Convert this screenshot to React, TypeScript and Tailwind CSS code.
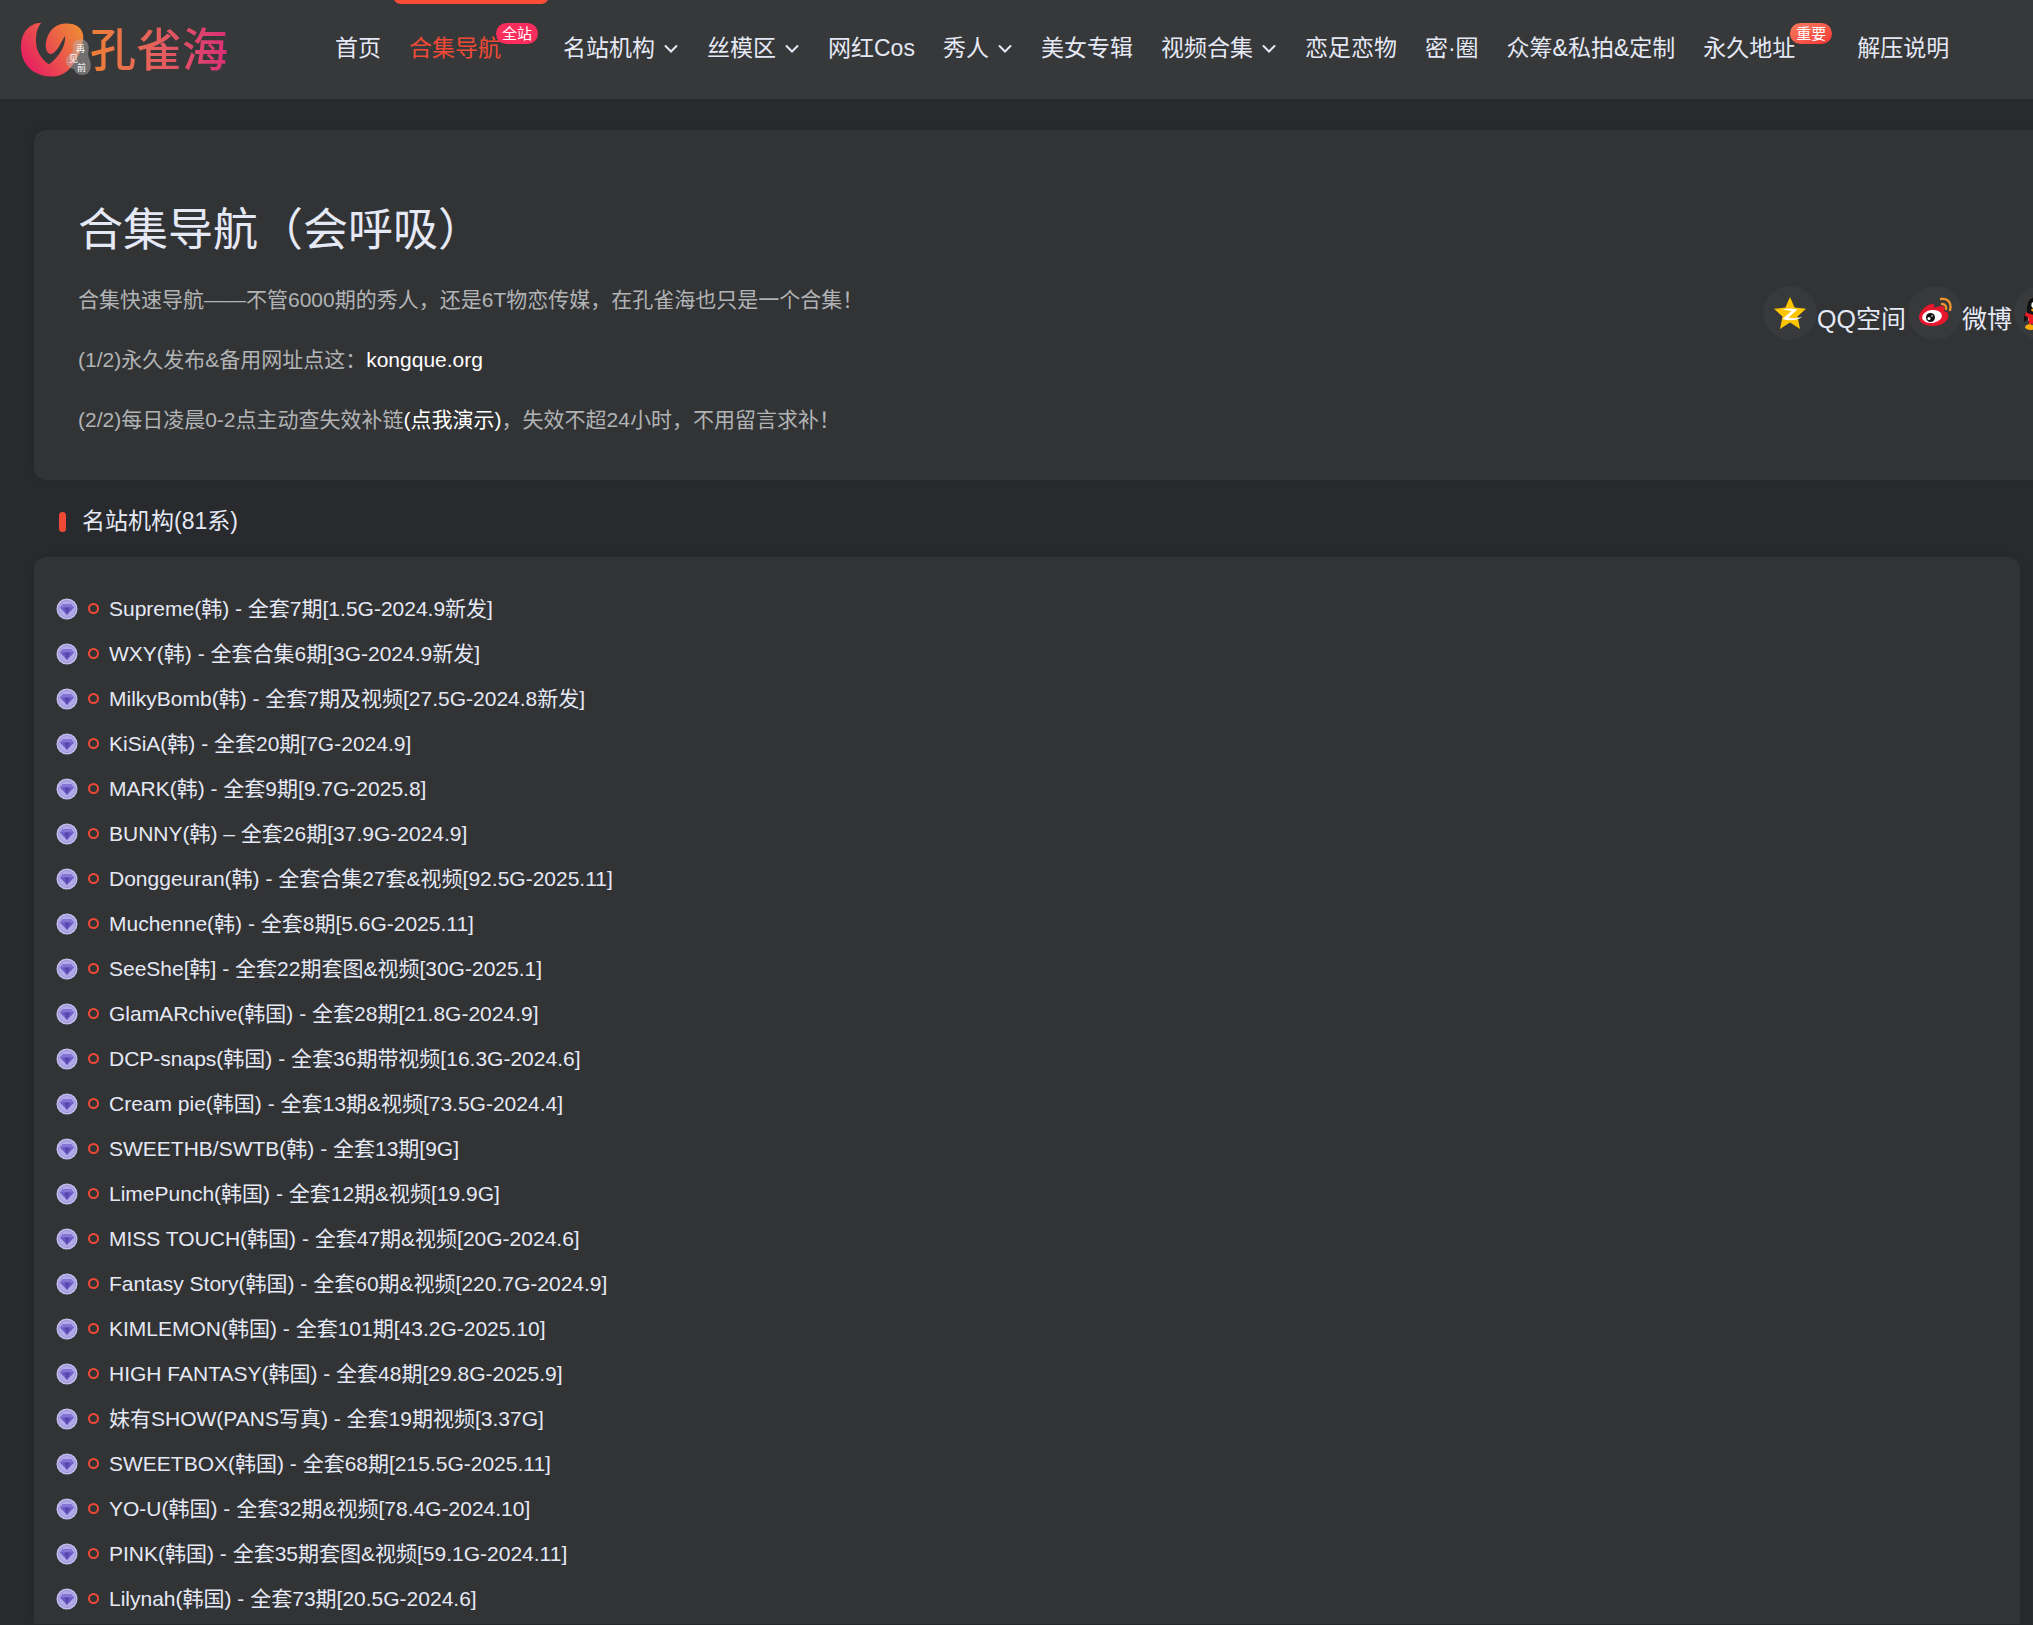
import { useId } from "react";

const FONT = 'font-["Liberation_Sans","Noto_Sans_CJK_SC",sans-serif]';

type NavItem = {
  label: string;
  active?: boolean;
  dropdown?: boolean;
  badge?: string;
  badgeClass?: string;
};

const NAV_ITEMS: NavItem[] = [
  { label: "首页" },
  { label: "合集导航", active: true, badge: "全站", badgeClass: "bg-[#fb2d5c]" },
  { label: "名站机构", dropdown: true },
  { label: "丝模区", dropdown: true },
  { label: "网红Cos" },
  { label: "秀人", dropdown: true },
  { label: "美女专辑" },
  { label: "视频合集", dropdown: true },
  { label: "恋足恋物" },
  { label: "密·圈" },
  { label: "众筹&私拍&定制" },
  {
    label: "永久地址",
    badge: "重要",
    badgeClass: "bg-linear-to-br from-[#f87b60] to-[#f62f35]",
  },
  { label: "解压说明" },
];

const COLLECTIONS = [
  "Supreme(韩) - 全套7期[1.5G-2024.9新发]",
  "WXY(韩) - 全套合集6期[3G-2024.9新发]",
  "MilkyBomb(韩) - 全套7期及视频[27.5G-2024.8新发]",
  "KiSiA(韩) - 全套20期[7G-2024.9]",
  "MARK(韩) - 全套9期[9.7G-2025.8]",
  "BUNNY(韩) – 全套26期[37.9G-2024.9]",
  "Donggeuran(韩) - 全套合集27套&视频[92.5G-2025.11]",
  "Muchenne(韩) - 全套8期[5.6G-2025.11]",
  "SeeShe[韩] - 全套22期套图&视频[30G-2025.1]",
  "GlamARchive(韩国) - 全套28期[21.8G-2024.9]",
  "DCP-snaps(韩国) - 全套36期带视频[16.3G-2024.6]",
  "Cream pie(韩国) - 全套13期&视频[73.5G-2024.4]",
  "SWEETHB/SWTB(韩) - 全套13期[9G]",
  "LimePunch(韩国) - 全套12期&视频[19.9G]",
  "MISS TOUCH(韩国) - 全套47期&视频[20G-2024.6]",
  "Fantasy Story(韩国) - 全套60期&视频[220.7G-2024.9]",
  "KIMLEMON(韩国) - 全套101期[43.2G-2025.10]",
  "HIGH FANTASY(韩国) - 全套48期[29.8G-2025.9]",
  "妹有SHOW(PANS写真) - 全套19期视频[3.37G]",
  "SWEETBOX(韩国) - 全套68期[215.5G-2025.11]",
  "YO-U(韩国) - 全套32期&视频[78.4G-2024.10]",
  "PINK(韩国) - 全套35期套图&视频[59.1G-2024.11]",
  "Lilynah(韩国) - 全套73期[20.5G-2024.6]",
];

function Chevron() {
  return (
    <svg viewBox="0 0 16 10" className="ml-2 h-[10px] w-4" fill="none" aria-hidden="true">
      <path d="M2.500 2L8 7.500 13.500 2" stroke="currentColor" strokeWidth="2" strokeLinecap="round" />
    </svg>
  );
}

function LogoMark() {
  const id = useId();
  return (
    <svg viewBox="0 0 74 60" className="h-[60px] w-[74px] shrink-0" aria-hidden="true">
      <defs>
        <linearGradient id={id} x1="0" y1="0.8" x2="1" y2="0.2">
          <stop offset="0.1" stopColor="#e8245f" />
          <stop offset="1" stopColor="#ee8a35" />
        </linearGradient>
      </defs>
      <path
        d="M21.500 2.800C9 3 1 13 1 27c0 17 12 29.500 31 29.500 14 0 21-10.500 25-18.500 5-8 7-18 6-24C61 6 54 3 45 3.500 34 4 28 12 26 22c-1 7 1 12 5 12 6-1 10-12 14-18 1 9-5 20-16 28.500C20 38 16 30 16 21c0-9 2-15 5.500-18.200z"
        fill={`url(#${id})`}
      />
      <path
        d="M55 21c5-3 11-2 13 3 2 6-1 9 1 14 3 6 2 13-2 16-6 2-11 1-13-5-6-1-9-5-8-10 2-5 6-4 7-9 0-4-1-7 2-9z"
        fill="#b9b4b1"
        opacity="0.45"
      />
      <g fill="#fff" fontSize="9" className='font-["Noto_Sans_CJK_SC",sans-serif]'>
        <text x="56" y="32">再</text>
        <text x="49" y="42">见</text>
        <text x="57" y="51">前</text>
      </g>
    </svg>
  );
}

function QzoneIcon() {
  return (
    <svg viewBox="0 0 34 34" className="size-[34px]" aria-hidden="true">
      <path
        d="M17 1l4.600 10.600L33 12.800l-8.500 7.700L27 33l-10-6.500L7 33l2.500-12.500L1 12.800l11.400-1.200z"
        fill="#fdc400"
      />
      <path d="M9.500 13.500c5-1.500 10-1.500 15 0l-9 8c4 1 9 1 14-1-5 4-13 5-20 2.500l9-8c-3-.8-6-1-9-1.500z" fill="#fff" />
    </svg>
  );
}

function WeiboIcon() {
  return (
    <svg viewBox="0 0 34 34" className="size-[34px]" aria-hidden="true">
      <path
        d="M13 8c3-1 4 1 3 4 4-2 9-3 10-1 1 1 0 3 0 4 4 1 5 4 4 7-2 5-8 8-15 8C7 30 1 27 1 21 1 16 8 9 13 8z"
        fill="#e6162d"
      />
      <ellipse cx="14" cy="20.500" rx="10" ry="6.500" fill="#fff" transform="rotate(-8 14 20.500)" />
      <circle cx="12.500" cy="21.500" r="4.500" fill="#111" />
      <circle cx="11" cy="22.500" r="1.500" fill="#fff" />
      <circle cx="14" cy="20" r="0.800" fill="#fff" />
      <g fill="none" stroke="#f0932f" strokeWidth="2.400" strokeLinecap="round">
        <path d="M23 3c7-1 11 4 9 11" />
        <path d="M24 8c3 0 4.500 2 4 5" />
      </g>
    </svg>
  );
}

function QQIcon() {
  return (
    <svg viewBox="4 0 34 34" className="size-[34px]" aria-hidden="true">
      <ellipse cx="11" cy="31" rx="6" ry="3" fill="#faab07" />
      <ellipse cx="23" cy="31" rx="6" ry="3" fill="#faab07" />
      <path d="M6 17c-3 4-4 8-2 9 1 0 2-2 3-3h20c1 1 2 3 3 3 2-1 1-5-2-9z" fill="#111" />
      <path d="M17 1c-7 0-10 5-10 11v9c0 6 5 9 10 9s10-3 10-9v-9c0-6-3-11-10-11z" fill="#111" />
      <path d="M8 20c4 3 14 3 18 0 1 5-2 9-9 9s-10-4-9-9z" fill="#fff" />
      <ellipse cx="13.500" cy="9" rx="2.200" ry="3" fill="#fff" />
      <ellipse cx="20.500" cy="9" rx="2.200" ry="3" fill="#fff" />
      <circle cx="14" cy="9.500" r="1" fill="#111" />
      <circle cx="20" cy="9.500" r="1" fill="#111" />
      <ellipse cx="17" cy="14" rx="6" ry="2" fill="#faab07" />
      <path d="M6 16c6 4 16 4 22 0l1 4c-5 3-11 3-16 2v6H9l-1-7-3-1z" fill="#eb1c26" />
    </svg>
  );
}

function DiamondBadge() {
  return (
    <svg viewBox="0 0 22 22" className="size-[22px] shrink-0" aria-hidden="true">
      <circle cx="11" cy="11" r="10.500" fill="#c3bdee" />
      <circle cx="11" cy="11" r="8.500" fill="#b3abe9" stroke="#9a92d6" />
      <path d="M7 6h8l3 3.500-7 7.500-7-7.500z" fill="#6d5bc4" />
      <path d="M7 6h8l3 3.500H4z" fill="#8474d4" />
      <path d="M8.500 9.500h5L11 17z" fill="#5545ac" />
    </svg>
  );
}

const SHARE_LINKS = [
  { name: "QQ空间", text: "QQ空间", Icon: QzoneIcon },
  { name: "微博", text: "微博", Icon: WeiboIcon },
  { name: "QQ好友", text: "", Icon: QQIcon },
];

function Header() {
  return (
    <header className="flex h-[99px] items-center bg-[#37383a] pl-5 whitespace-nowrap">
      <a href="#" aria-label="孔雀海" className="flex w-[315px] shrink-0 items-center">
        <LogoMark />
        <span className="-ml-1 bg-linear-to-r from-[#ee8132] to-[#d92c76] bg-clip-text text-[46px] leading-[60px] font-medium text-transparent">
          孔雀海
        </span>
      </a>
      <nav className="flex h-full gap-7 text-[23px] text-[#e5e9f5]">
        {NAV_ITEMS.map((item) => (
          <a
            key={item.label}
            href="#"
            className={`relative flex h-full shrink-0 items-center pb-[2px] ${item.active ? "text-[#f04a36]" : ""} ${item.badge ? "mr-[34px]" : ""}`}
          >
            {item.label}
            {item.dropdown && <Chevron />}
            {item.active && (
              <span className="absolute -top-1 -right-12 -left-4 h-2 rounded-b-lg bg-[#fb4c38]" />
            )}
            {item.badge && (
              <span
                className={`absolute top-[23px] left-[87px] rounded-full px-[6px] text-[15px] leading-[21px] text-white ${item.badgeClass}`}
              >
                {item.badge}
              </span>
            )}
          </a>
        ))}
      </nav>
    </header>
  );
}

function Hero() {
  return (
    <section className="-mr-12 flex items-center justify-between rounded-xl bg-[#323335] pt-[62px] pb-[30px] pl-11 shadow-[0_0_10px_rgba(0,0,0,0.1)]">
      <div className="text-[21px] text-[#b1b3b5]">
        <h1 className="text-[45px] leading-[78px] text-[#e5e9f5]">合集导航（会呼吸）</h1>
        <p className="leading-[60px]">合集快速导航——不管6000期的秀人，还是6T物恋传媒，在孔雀海也只是一个合集！</p>
        <p className="leading-[60px]">
          (1/2)永久发布&备用网址点这：
          <a href="#" className="text-white">kongque.org</a>
        </p>
        <p className="leading-[60px]">
          (2/2)每日凌晨0-2点主动查失效补链
          <a href="#" className="text-white">(点我演示)</a>
          ，失效不超24小时，不用留言求补！
        </p>
      </div>
      <div className="flex shrink-0 gap-[2px] pb-4 text-[25px] text-[#e5e9f5]">
        {SHARE_LINKS.map(({ name, text, Icon }) => (
          <a key={name} href="#" aria-label={name} className="flex items-center">
            <span className="flex size-[54px] items-center justify-center rounded-full bg-[#38393b]">
              <Icon />
            </span>
            {text && <span className="pt-3 leading-[36px]">{text}</span>}
          </a>
        ))}
      </div>
    </section>
  );
}

export default function App() {
  return (
    <div className={`min-h-screen overflow-hidden bg-[#292a2d] ${FONT}`}>
      <Header />
      <main className="pt-[31px] pr-[13px] pl-[34px]">
        <Hero />
        <h2 className="flex h-[77px] items-center gap-4 pt-[6px] pl-[25px] text-[23px] text-[#e5e9f5]">
          <span className="h-5 w-[7px] rounded-full bg-[#f04a36]" />
          名站机构(81系)
        </h2>
        <ul className="rounded-t-xl bg-[#323335] pt-[29px] pb-[3px] pl-[22px] text-[21px] leading-[45px] text-[#e5e9f5] shadow-[0_0_10px_rgba(0,0,0,0.1)]">
          {COLLECTIONS.map((name) => (
            <li key={name} className="flex">
              <a href="#" className="flex items-center">
                <DiamondBadge />
                <span className="mx-[10px] size-[11px] rounded-full border-2 border-[#f04a36]" />
                {name}
              </a>
            </li>
          ))}
        </ul>
      </main>
    </div>
  );
}
